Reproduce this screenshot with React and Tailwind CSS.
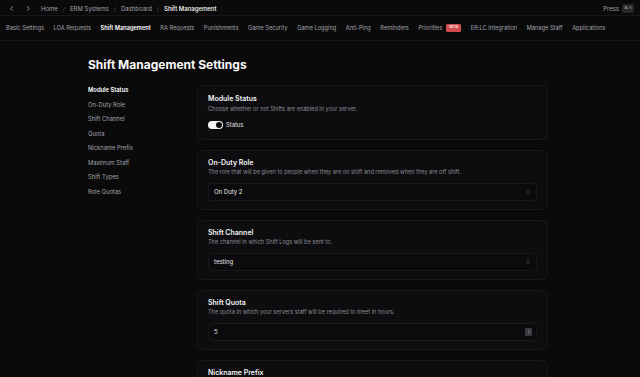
import React from 'react';
import { ChevronLeft, ChevronRight, ChevronsUpDown } from 'lucide-react';

const tabs = [
  'Basic Settings',
  'LOA Requests',
  'Shift Management',
  'RA Requests',
  'Punishments',
  'Game Security',
  'Game Logging',
  'Anti-Ping',
  'Reminders',
  'Priorities',
  'ER:LC Integration',
  'Manage Staff',
  'Applications'
];

const sideItems = [
  'Module Status',
  'On-Duty Role',
  'Shift Channel',
  'Quota',
  'Nickname Prefix',
  'Maximum Staff',
  'Shift Types',
  'Role Quotas'
];

function Card({ title, description, first, children }) {
  return (
    <div
      className={
        first
          ? 'rounded-[5px] border border-[#18181b] bg-[#0d0d0f] px-[10px] pt-[8px] pb-[9px]'
          : 'rounded-[5px] border border-[#18181b] bg-[#0d0d0f] px-[10px] pt-[7px] pb-[8px]'
      }
    >
      <div className="text-[7px] font-semibold leading-[10px] text-[#f4f4f5]">{title}</div>
      <div className={first ? 'mt-[1px] text-[5.6px] leading-[9px] text-[#8b8b93]' : 'text-[5.6px] leading-[9px] text-[#8b8b93]'}>
        {description}
      </div>
      {children}
    </div>
  );
}

function SelectBox({ value }) {
  return (
    <div className="mt-[6px] flex h-[18px] items-center justify-between rounded-[3px] border border-[#18181b] bg-[#0b0b0d] pl-[5px] pr-[5px]">
      <span className="text-[6px] text-[#e4e4e7]">{value}</span>
      <ChevronsUpDown className="h-[6px] w-[6px] text-[#71717a]" strokeWidth={2} />
    </div>
  );
}

function NumberBox({ value }) {
  return (
    <div className="mt-[6px] flex h-[18px] items-center justify-between rounded-[3px] border border-[#18181b] bg-[#0b0b0d] pl-[5px] pr-[4px]">
      <span className="text-[6px] text-[#e4e4e7]">{value}</span>
      <div className="flex h-[8px] w-[7px] flex-col items-center justify-center gap-[1px] rounded-[1px] bg-[#3a3a40]">
        <div className="h-0 w-0 border-x-[1.5px] border-b-[1.5px] border-x-transparent border-b-[#a1a1aa]" />
        <div className="h-0 w-0 border-x-[1.5px] border-t-[1.5px] border-x-transparent border-t-[#a1a1aa]" />
      </div>
    </div>
  );
}

export default function App() {
  return (
    <div
      className="h-[377px] w-[640px] overflow-hidden bg-[#0a0a0b] text-white"
      style={{ fontFamily: 'Inter, "Noto Sans", sans-serif' }}
    >
      <div className="flex h-[16px] items-center justify-between border-b border-[#17171a] pl-[8px] pr-[6px] pt-[1px]">
        <div className="flex items-center whitespace-nowrap text-[6px] text-[#a1a1aa]">
          <ChevronLeft className="h-[7px] w-[7px] text-[#d4d4d8]" strokeWidth={2.5} />
          <ChevronRight className="ml-[10px] h-[7px] w-[7px] text-[#d4d4d8]" strokeWidth={2.5} />
          <span className="ml-[9px]">Home</span>
          <span className="mx-[5px] text-[#52525b]">/</span>
          <span>ERM Systems</span>
          <span className="mx-[5px] text-[#52525b]">/</span>
          <span>Dashboard</span>
          <span className="mx-[5px] text-[#52525b]">/</span>
          <span className="font-medium text-white">Shift Management</span>
        </div>
        <div className="flex items-center gap-[3px] whitespace-nowrap text-[6px] text-[#a1a1aa]">
          <span>Press</span>
          <span className="flex h-[9px] w-[12px] items-center justify-center rounded-[2px] bg-[#27272a] text-[4px] text-[#a1a1aa]">⌘ K</span>
        </div>
      </div>

      <div className="flex h-[25px] items-center gap-[9.5px] border-b border-[#17171a] pl-[6px] text-[5.7px] text-[#a1a1aa]">
        {tabs.map((tab) => (
          <div
            key={tab}
            className={
              tab === 'Shift Management'
                ? 'flex shrink-0 items-center whitespace-nowrap font-semibold text-white'
                : 'flex shrink-0 items-center whitespace-nowrap'
            }
          >
            {tab}
            {tab === 'Priorities' && (
              <span className="ml-[4px] flex h-[8px] items-center rounded-[1.5px] bg-[#d34b4b] px-[3px] text-[3.5px] font-bold text-[#fde2e2]">
                BETA
              </span>
            )}
          </div>
        ))}
      </div>

      <div className="mx-auto w-[464px] pr-[4px]">
        <h1 className="pt-[14px] text-[12px] font-bold leading-[20px] text-[#fafafa]">
          Shift Management Settings
        </h1>

        <div className="mt-[10px] flex">
          <div className="flex w-[109px] shrink-0 flex-col gap-[5px]">
            {sideItems.map((item, i) => (
              <div
                key={item}
                className={
                  i === 0
                    ? 'text-[5.8px] font-semibold leading-[9.5px] text-white'
                    : 'text-[5.8px] leading-[9.5px] text-[#a1a1aa]'
                }
              >
                {item}
              </div>
            ))}
          </div>

          <div className="flex flex-1 flex-col gap-[10px]">
            <Card first title="Module Status" description="Choose whether or not Shifts are enabled in your server.">
              <div className="mt-[7px] flex items-center gap-[3px]">
                <div className="flex h-[8px] w-[15px] items-center justify-end rounded-full bg-[#f4f4f5] pr-[1px]">
                  <div className="h-[6px] w-[6px] rounded-full bg-[#0a0a0b]" />
                </div>
                <span className="text-[5.8px] text-[#e4e4e7]">Status</span>
              </div>
            </Card>

            <Card
              title="On-Duty Role"
              description="The role that will be given to people when they are on shift and removed when they are off shift."
            >
              <SelectBox value="On Duty 2" />
            </Card>

            <Card title="Shift Channel" description="The channel in which Shift Logs will be sent to.">
              <SelectBox value="testing" />
            </Card>

            <Card title="Shift Quota" description="The quota in which your servers staff will be required to meet in hours.">
              <NumberBox value="5" />
            </Card>

            <Card title="Nickname Prefix" description="The prefix that will be added to a staff member's nickname when on shift.">
              <SelectBox value="" />
            </Card>
          </div>
        </div>
      </div>
    </div>
  );
}
